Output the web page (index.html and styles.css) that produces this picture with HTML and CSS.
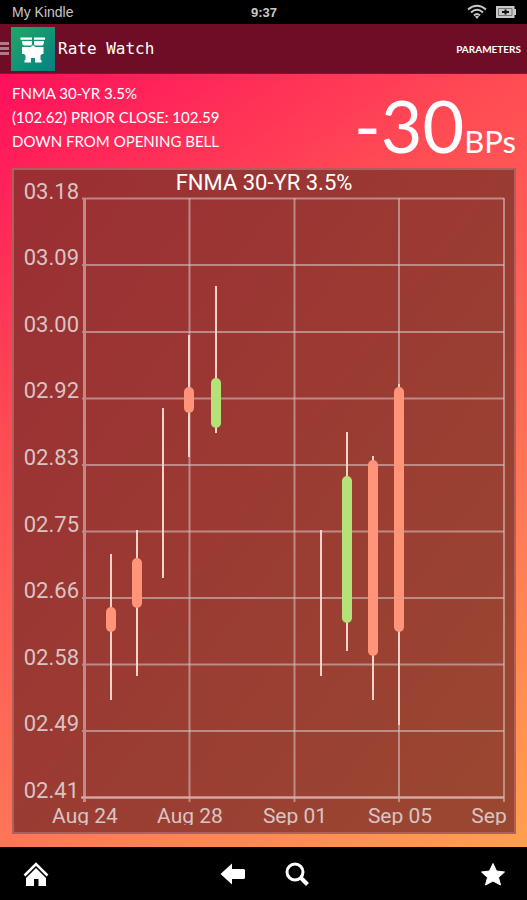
FILE: index.html
```html
<!DOCTYPE html>
<html lang="en">
<head>
    <meta charset="utf-8">
    <meta name="viewport" content="width=device-width, initial-scale=1">
    <title>Rate Watch</title>
    <link rel="stylesheet" href="styles.css">
</head>
<body>
    <div class="status-bar">
        <span class="device">My Kindle</span>
        <span class="time">9:37</span>
        <span class="status-icons">
            <svg width="20" height="16" viewBox="0 0 20 16" fill="none" stroke="#c8c8c8" stroke-width="2">
                <path d="M1 5.5Q10-2 19 5.5M4 8.5Q10 3 16 8.5M7 11.5Q10 8.500 13 11.500"/>
                <path d="M8 12.500Q10 11 12 12.500L10 15z" fill="#c8c8c8" stroke="none"/>
            </svg>
            <svg width="20" height="12" viewBox="0 0 20 12">
                <path d="M0 0h18.500v3H20v6h-1.500v3H0z" fill="#c8c8c8"/>
                <path d="M2.500 2.500h13.500v7H2.500z" fill="none" stroke="#777"/>
                <path d="M6 5h2.500V3.500h2V5H13v2h-2.500v1.500h-2V7H6z" fill="#111"/>
            </svg>
        </span>
    </div>

    <header class="app-bar">
        <button class="menu" aria-label="Menu"><i></i><i></i><i></i></button>
        <svg class="logo" width="44" height="44" viewBox="0 0 44 44">
            <defs>
                <linearGradient id="logo-bg" x1="0" y1="0" x2="1" y2="1">
                    <stop offset="0" stop-color="#1fa866"/>
                    <stop offset="1" stop-color="#097f83"/>
                </linearGradient>
            </defs>
            <path d="M0 0h44v44H0z" fill="url(#logo-bg)"/>
            <g fill="#fff">
                <path d="M9.500 10.500H21v2.300H9.500zM23 10.500h11v2.300H23z"/>
                <path d="M11 14h10v3q0 1.500-1.500 1.500h-6Q11 18.500 11 14zM23 14h10q0 4.500-2.500 4.500h-6Q23 18.500 23 17z"/>
                <path d="M11 20h9l1-1.500h2l1 1.500h8.500v7H31l-1.500 1.500V33h1v2.500H24V31h-4v4.500h-6.500V33h1v-4.500L13 27h-2z"/>
            </g>
        </svg>
        <h1>Rate Watch</h1>
        <button class="parameters">PARAMETERS</button>
    </header>

    <main class="content">
        <section class="summary">
            <p>FNMA 30-YR 3.5%<br>(102.62) PRIOR CLOSE: 102.59<br>DOWN FROM OPENING BELL</p>
            <div class="change">-30<span>BPs</span></div>
        </section>

        <svg class="chart" viewBox="0 0 504 666">
            <defs>
                <linearGradient id="panel-bg" x1="0" y1="0" x2="1" y2="1">
                    <stop offset="0" stop-color="#9b2e34"/>
                    <stop offset="1" stop-color="#9a4831"/>
                </linearGradient>
            </defs>
            <rect class="panel" x="1" y="1" width="502" height="664"/>
            <text class="chart-title" x="252" y="22">FNMA 30-YR 3.5%</text>

            <path class="grid" d="M70 30.500h422M70 97h422M70 164h422M70 230.500h422M70 297h422M70 363.500h422M70 430h422M70 496.500h422M70 563h422M70 629.500h422"/>
            <path class="grid" d="M177.500 30v604M282.500 30v604M387 30v604M492 30v604"/>
            <path class="axis-y" d="M72.500 30v604"/>
            <path class="axis-x" d="M69 629.500h423"/>

            <g class="y-labels">
                <text x="67" y="31">03.18</text>
                <text x="67" y="97">03.09</text>
                <text x="67" y="164">03.00</text>
                <text x="67" y="230">02.92</text>
                <text x="67" y="297">02.83</text>
                <text x="67" y="364">02.75</text>
                <text x="67" y="430">02.66</text>
                <text x="67" y="497">02.58</text>
                <text x="67" y="563">02.49</text>
                <text x="67" y="630">02.41</text>
            </g>

            <!-- the label strip is cut off just under the baseline -->
            <svg class="x-labels" x="0" y="634" width="504" height="23" viewBox="0 0 504 23">
                <text x="73" y="21">Aug 24</text>
                <text x="178" y="21">Aug 28</text>
                <text x="283" y="21">Sep 01</text>
                <text x="388" y="21">Sep 05</text>
                <text x="477" y="21">Sep</text>
            </svg>

            <path class="wick" d="M99 386v146M125 362v146M151 240v170M177 167v122M204 118v147M309 362v146M335 264v219M361 288v244M387 216v341"/>
            <g class="down">
                <rect x="94" y="439" width="10" height="25" rx="5"/>
                <rect x="120" y="390" width="10" height="50" rx="5"/>
                <rect x="172" y="219" width="10" height="26" rx="5"/>
                <rect x="356" y="292" width="10" height="196" rx="5"/>
                <rect x="382" y="219" width="10" height="245" rx="5"/>
            </g>
            <g class="up">
                <rect x="199" y="210" width="10" height="50" rx="5"/>
                <rect x="330" y="308" width="10" height="147" rx="5"/>
            </g>
        </svg>
    </main>

    <nav class="bottom-bar">
        <button aria-label="Home">
            <svg width="26" height="24" viewBox="0 0 26 24">
                <path d="M1.500 13.500L13 2l11.500 11.500" fill="none" stroke="#fff" stroke-width="2.500"/>
                <path d="M13 6l10 10v8h-7.500v-7h-4.500v7H3v-8z" fill="#fff"/>
            </svg>
        </button>
        <button aria-label="Back">
            <svg width="26" height="24" viewBox="0 0 26 24">
                <path d="M0.500 12L12 1.500V7h11.500q1.500 0 1.500 1.500v7q0 1.500-1.500 1.500H12v5.500z" fill="#fff"/>
            </svg>
        </button>
        <button aria-label="Search">
            <svg width="26" height="24" viewBox="0 0 26 24" fill="none" stroke="#fff">
                <circle cx="11" cy="10" r="8" stroke-width="3"/>
                <path d="M16.500 15.500l7 7" stroke-width="4"/>
            </svg>
        </button>
        <button aria-label="Favorites">
            <svg width="26" height="24" viewBox="0 0 26 24">
                <path d="M13 1.500l3.500 7.500 8 1-6 5.500 2 7.500-7.500-4-7.500 4 2-7.500-6-5.500 8-1z" fill="#fff" stroke="#fff" stroke-linejoin="round"/>
            </svg>
        </button>
    </nav>
</body>
</html>
```
FILE: styles.css
```css
* {
    box-sizing: border-box;
}

body {
    margin: 0;
    min-height: 100vh;
    display: flex;
    flex-direction: column;
    background-color: #000;
    color: #fff;
    font-family: Lato, sans-serif;
}

button {
    padding: 0;
    border: none;
    background: none;
    color: inherit;
    font-family: inherit;
    cursor: pointer;
}

svg {
    display: block;
}

/* Status bar */
.status-bar {
    display: grid;
    grid-template-columns: 1fr auto 1fr;
    align-items: center;
    height: 24px;
    padding: 0 11px 0 12px;
    color: #c8c8c8;
    font-family: "Liberation Sans", Arial, sans-serif;
    font-size: 13px;
    font-weight: bold;
}

.device {
    font-size: 14px;
    font-weight: normal;
}

.status-icons {
    display: flex;
    justify-content: flex-end;
    align-items: center;
    gap: 9px;
}

/* App bar */
.app-bar {
    display: flex;
    align-items: center;
    height: 50px;
    padding-right: 6px;
    background-color: #6f0d26;
    border-bottom: 1px solid #8c0f35;
}

.menu {
    display: flex;
    flex-direction: column;
    gap: 2px;
    width: 9px;
    margin-right: 2px;
}

.menu i {
    height: 3px;
    background-color: #a87c88;
}

.app-bar h1 {
    flex: 1;
    margin: 0 0 0 3px;
    font-family: "DejaVu Sans Mono", monospace;
    font-size: 16px;
    font-weight: normal;
}

.parameters {
    font-size: 10px;
    font-weight: bold;
}

/* Summary + chart */
.content {
    flex: 1;
    padding: 0 11px 13px 12px;
    background: linear-gradient(145deg, #ff0f5c, #ff4c54 32%, #ff7656 68%, #ffa04c);
}

.summary {
    display: flex;
    justify-content: space-between;
    height: 94px;
}

.summary p {
    margin: 7px 0 0;
    font-size: 15px;
    line-height: 24px;
}

.change {
    padding-top: 8px;
    font-size: 72px;
    line-height: 86px;
    white-space: nowrap;
}

.change span {
    font-size: 31px;
}

.chart {
    width: 100%;
    height: auto;
    font-family: Roboto, sans-serif;
    font-size: 22px;
}

.panel {
    fill: url(#panel-bg);
    stroke: #b0605c;
    stroke-width: 2;
}

.chart-title {
    fill: #fff;
    text-anchor: middle;
}

.grid {
    stroke: rgba(214, 190, 190, 0.600);
    stroke-width: 2;
}

.axis-y {
    stroke: #c08a88;
    stroke-width: 3;
}

.axis-x {
    stroke: #dcaaa4;
    stroke-width: 2;
}

.y-labels {
    fill: #d8c4c2;
    text-anchor: end;
}

.x-labels {
    fill: #d8c4c2;
    font-size: 21px;
    text-anchor: middle;
    overflow: hidden;
}

.wick {
    stroke: #fad2c8;
    stroke-width: 2;
}

.down {
    fill: #ff9478;
}

.up {
    fill: #b4e278;
}

/* Bottom bar */
.bottom-bar {
    display: grid;
    grid-template-columns: 1fr auto auto 1fr;
    align-items: center;
    column-gap: 38px;
    height: 53px;
    padding: 0 21px 0 23px;
}

.bottom-bar button:first-child {
    justify-self: start;
}

.bottom-bar button:last-child {
    justify-self: end;
}
```
